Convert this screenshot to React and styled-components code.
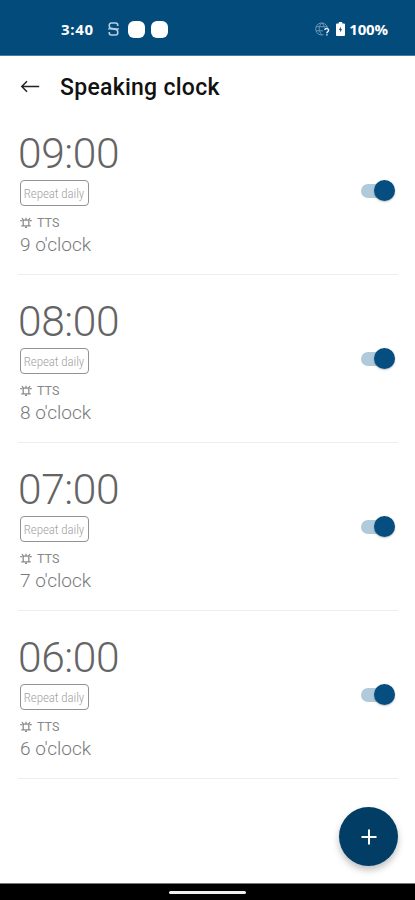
import React from 'react';
import styled, { createGlobalStyle } from 'styled-components'

const CLOCKS = [
    { id: 9, time: '09:00', label: "9 o'clock" },
    { id: 8, time: '08:00', label: "8 o'clock" },
    { id: 7, time: '07:00', label: "7 o'clock" },
    { id: 6, time: '06:00', label: "6 o'clock" },
]

const AlarmIcon = () => (
    <AlarmSvg width="12" height="11" viewBox="0 0 12 11" fill="none" stroke="#8c8c8c" strokeWidth="1.3">
        <path d="M3.2 8.5V3.2h5.6v5.3M1.3 8.9h9.4M5 10.4h2M6 .7v2M3.2 2.9 2 1M8.8 2.9 10 1M.2 3.6h2M9.8 3.6h2" />
    </AlarmSvg>
)

const StatusBar = () => (
    <StatusBarStyle>
        <StatusGroup>
            <StatusText $spacing="0.7px">3:40</StatusText>
            <SyncIcon width="11" height="14" viewBox="0 0 11 14" fill="none" stroke="#b9d0e2" strokeWidth="1.6">
                <path d="M9.7 4V3a2 2 0 0 0-2-2H3.3a2 2 0 0 0-2 2v1.2c0 1.4.8 2 2 2.2l4.4 1c1.2.3 2 .9 2 2.2V11a2 2 0 0 1-2 2H3.3a2 2 0 0 1-2-2v-1" />
                <path d="M0 6.9h11" strokeWidth="1.3" />
            </SyncIcon>
            <Notification />
            <Notification />
        </StatusGroup>
        <StatusGroup>
            <svg width="15" height="14" viewBox="0 0 15 14" fill="none">
                <g stroke="#6f96b6" strokeWidth="1">
                    <path d="M8.5 12.7A6 6 0 1 1 12.6 6M1 4.7h11M1 8.8h7M6.7.8c-3.3 3.7-3.3 8.2 0 12M6.7.8c1.8 1.6 2.6 3.3 2.7 5" />
                </g>
                <path d="M9.8 8c.2-2 3.8-2 3.8.2 0 1.4-1.7 1.5-1.7 3M11.9 12.2v1.3" stroke="#e6eff6" strokeWidth="1.5" />
            </svg>
            <BatteryIcon width="9" height="14" viewBox="0 0 9 14">
                <path fill="#fff" d="M2.8 0h3.4v1.4H8a1 1 0 0 1 1 1V13a1 1 0 0 1-1 1H1a1 1 0 0 1-1-1V2.4a1 1 0 0 1 1-1h1.8z" />
                <path fill="#024b7b" d="M4.8 4.6 3 8h1.2v2.4L6 7H4.8z" />
            </BatteryIcon>
            <StatusText>100%</StatusText>
        </StatusGroup>
    </StatusBarStyle>
)

const ClockRow = ({ time, label }) => (
    <ClockRowStyle>
        <div>
            <Time>{time}</Time>
            <Chip><span>Repeat daily</span></Chip>
            <Source>
                <AlarmIcon />
                TTS
            </Source>
            <Label>{label}</Label>
        </div>
        <Switch role="switch" aria-checked="true"><Thumb /></Switch>
    </ClockRowStyle>
)

const App = () => {
    return (
        <Screen>
            <GlobalStyle />
            <StatusBar />
            <Header>
                <svg width="20" height="16" viewBox="0 0 20 16" fill="none" stroke="#222" strokeWidth="1.5">
                    <path d="M7 2.2 1.8 7.5 7 12.8M1.8 7.5h17.4" />
                </svg>
                <h1>Speaking clock</h1>
            </Header>
            <List>
                {CLOCKS.map(c => <ClockRow key={c.id} time={c.time} label={c.label} />)}
            </List>
            <AddButton aria-label="Add">
                <svg width="16" height="16" viewBox="0 0 16 16" stroke="#fff" strokeWidth="2">
                    <path d="M8 .5v15M.5 8h15" />
                </svg>
            </AddButton>
            <NavBar><Handle /></NavBar>
        </Screen>
    )
}

export default App

const GlobalStyle = createGlobalStyle`
* {
    box-sizing: border-box;
}
body {
    margin: 0;
    background: #fff;
    font-family: Roboto, sans-serif;
}
`
const Screen = styled.div`
position: relative;
display: flex;
flex-direction: column;
width: 415px;
height: 900px;
overflow: hidden;
background: #fff;
`
const StatusBarStyle = styled.div`
display: flex;
justify-content: space-between;
height: 56px;
padding: 3px 27px 0 61px;
background: #024b7b;
border-bottom: 1px solid #4a7ba5;
`
const StatusGroup = styled.div`
display: flex;
align-items: center;
`
const StatusText = styled.span`
padding-bottom: 1px;
color: #fff;
font-family: "Open Sans", sans-serif;
font-size: 15px;
font-weight: 700;
letter-spacing: ${props => props.$spacing || '-0.1px'};
`
const SyncIcon = styled.svg`
margin: 0 9px 0 14px;
`
const Notification = styled.div`
width: 17px;
height: 17px;
margin-right: 6px;
border-radius: 6px;
background: #fff;
`
const BatteryIcon = styled.svg`
margin: 0 4px 0 6px;
`
const AlarmSvg = styled.svg`
margin-bottom: 2px;
`
const Header = styled.header`
display: flex;
align-items: center;
height: 51px;
padding: 11px 20px 0;
h1 {
    margin: 2px 0 0 20px;
    color: #111;
    font-size: 23px;
    font-weight: 500;
    line-height: 28px;
    letter-spacing: 0.27px;
}
`
const List = styled.main`
flex: 1;
padding: 0 17px 0 18px;
`
const ClockRowStyle = styled.section`
display: flex;
align-items: center;
justify-content: space-between;
height: 168px;
border-bottom: 1px solid #eee;
`
const Time = styled.div`
margin: 7px 0 1px 0;
color: #646464;
font-size: 42.5px;
font-weight: 300;
line-height: 50px;
letter-spacing: -0.4px;
`
const Chip = styled.div`
display: flex;
align-items: center;
justify-content: center;
width: 69px;
height: 26px;
margin-left: 2px;
padding-right: 1px;
border: 1px solid #929292;
border-radius: 4px;
span {
    color: #a2a2a2;
    font-size: 13px;
    font-weight: 300;
    font-stretch: 75%;
    white-space: nowrap;
    letter-spacing: -0.1px;
}
`
const Source = styled.div`
display: flex;
align-items: center;
gap: 5px;
margin: 9px 0 0 2px;
color: #888;
font-size: 12.5px;
line-height: 16px;
`
const Label = styled.div`
margin-left: 2px;
color: #787878;
font-size: 19px;
font-weight: 300;
line-height: 28px;
`
const Switch = styled.div`
display: flex;
align-items: center;
justify-content: flex-end;
width: 34px;
height: 14px;
margin-right: 3px;
border-radius: 7px;
background: #b0c9db;
`
const Thumb = styled.div`
width: 21px;
height: 21px;
border-radius: 50%;
background: #064e80;
box-shadow: 0 1px 2px rgba(0, 0, 0, 0.25);
`
const AddButton = styled.button`
position: absolute;
right: 17px;
bottom: 34px;
display: flex;
align-items: center;
justify-content: center;
width: 59px;
height: 59px;
padding: 0;
border: 0;
border-radius: 50%;
background: #023d65;
box-shadow: 0 4px 7px rgba(0, 0, 0, 0.25);
`
const NavBar = styled.footer`
display: flex;
align-items: center;
justify-content: center;
height: 17px;
border-top: 1px solid #777;
background: #000;
`
const Handle = styled.div`
width: 77px;
height: 3px;
border-radius: 2px;
background: #f0f0f0;
`
